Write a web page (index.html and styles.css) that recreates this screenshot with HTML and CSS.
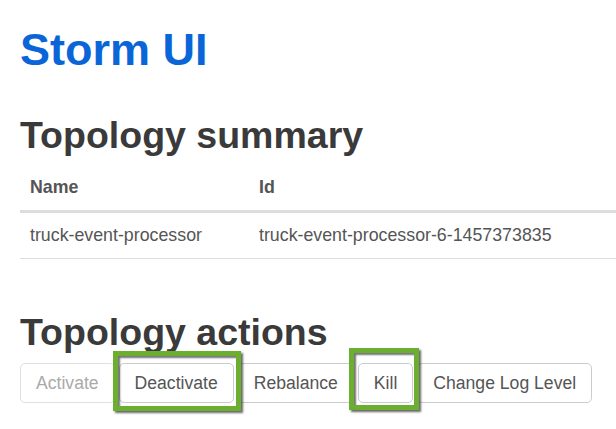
FILE: index.html
```html
<!DOCTYPE html>
<html lang="en">
<head>
<meta charset="utf-8">
<title>Storm UI</title>
<link rel="stylesheet" href="styles.css">
</head>
<body>
<div class="page">
  <h1 class="brand">Storm UI</h1>

  <h2 class="section-title summary-title">Topology summary</h2>
  <table class="summary">
    <colgroup><col class="col-name"><col></colgroup>
    <thead>
      <tr><th>Name</th><th>Id</th></tr>
    </thead>
    <tbody>
      <tr><td>truck-event-processor</td><td>truck-event-processor-6-1457373835</td></tr>
    </tbody>
  </table>

  <h2 class="section-title actions-title">Topology actions</h2>
  <div class="actions">
    <button class="btn" disabled>Activate</button>
    <span class="hl hl-deactivate"><button class="btn">Deactivate</button></span>
    <button class="btn">Rebalance</button>
    <span class="hl hl-kill"><button class="btn">Kill</button></span>
    <button class="btn">Change Log Level</button>
  </div>
</div>
</body>
</html>
```

FILE: styles.css
```css
* { box-sizing: border-box; }

html, body {
  margin: 0;
  padding: 0;
  background: #ffffff;
}

body {
  font-family: "Liberation Sans", Arial, sans-serif;
  color: #555555;
  font-size: 17.5px;
  line-height: 25px;
}

.page {
  padding: 25px 0 0 20px;
  min-height: 429px;
}

.brand {
  margin: 0;
  font-size: 45px;
  line-height: 50px;
  font-weight: bold;
  color: #0a66d8;
}

.section-title {
  font-size: 37.5px;
  line-height: 41px;
  font-weight: bold;
  color: #3a3a3a;
  margin: 0;
}

.summary-title {
  margin-top: 40px;
  margin-bottom: 9px;
}

.summary {
  width: 100%;
  border-collapse: collapse;
  table-layout: fixed;
}

.col-name { width: 229px; }

.summary th,
.summary td {
  text-align: left;
  padding: 10px;
  line-height: 25px;
  font-size: 17.8px;
  white-space: nowrap;
}

.summary th {
  font-weight: bold;
  color: #555555;
  border-bottom: 3px solid #dddddd;
}

.summary td {
  color: #555555;
  border-bottom: 1px solid #dddddd;
}

.actions-title {
  margin-top: 53px;
  margin-bottom: 10px;
}

.actions {
  display: flex;
  align-items: flex-start;
  gap: 4px;
}

.btn {
  display: block;
  font-family: "Liberation Sans", Arial, sans-serif;
  font-size: 17.6px;
  line-height: 24px;
  padding: 7px 15px;
  border: 1px solid #cccccc;
  border-radius: 5px;
  background: #ffffff;
  color: #555555;
  margin: 0;
}

.btn:disabled {
  color: #aaaaaa;
  border-color: #e0e0e0;
}

.hl {
  position: relative;
  display: flex;
}

.hl::after {
  content: "";
  position: absolute;
  z-index: 2;
  border: 5px solid #6cae2f;
  box-shadow: 2px 2px 2px rgba(0, 0, 0, 0.6), inset 2px 2px 2px rgba(0, 0, 0, 0.55);
  pointer-events: none;
}

.hl-deactivate::after {
  left: -6px;
  right: -7px;
  top: -12px;
  bottom: -8px;
}

.hl-kill::after {
  left: -9px;
  right: -6px;
  top: -15px;
  bottom: -7px;
}
```
